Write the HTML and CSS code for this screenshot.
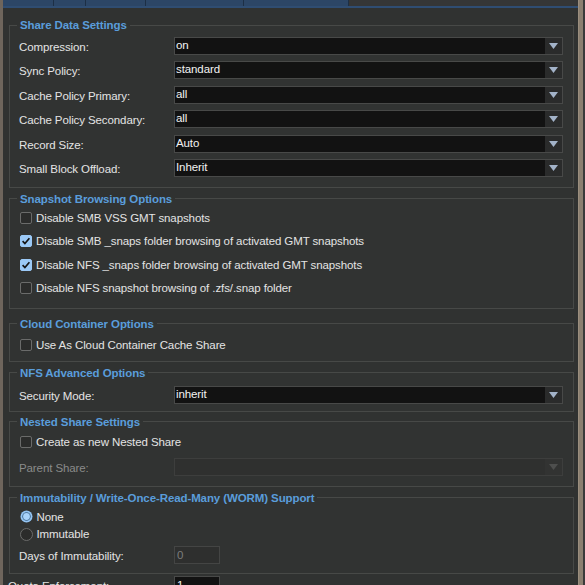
FILE: index.html
```html
<!DOCTYPE html>
<html>
<head>
<meta charset="utf-8">
<link rel="stylesheet" href="styles.css">
</head>
<body>
<div class="frame">
  <div class="strip-left"></div>
  <div class="main">
    <div class="tabs">
      <div class="tab w1"></div>
      <div class="tab w2"></div>
      <div class="tab w3"></div>
      <div class="tab w4"></div>
      <div class="tab w5"></div>
      <div class="tab-rest"></div>
    </div>

    <fieldset class="fs fs1">
      <legend>Share Data Settings</legend>
      <div class="grid">
        <label class="lbl">Compression:</label>
        <div class="select"><span class="val">on</span><span class="arrow"><svg width="9" height="6" viewBox="0 0 9 6"><path d="M0 0H9L4.5 6Z"/></svg></span></div>
        <label class="lbl">Sync Policy:</label>
        <div class="select"><span class="val">standard</span><span class="arrow"><svg width="9" height="6" viewBox="0 0 9 6"><path d="M0 0H9L4.5 6Z"/></svg></span></div>
        <label class="lbl">Cache Policy Primary:</label>
        <div class="select"><span class="val">all</span><span class="arrow"><svg width="9" height="6" viewBox="0 0 9 6"><path d="M0 0H9L4.5 6Z"/></svg></span></div>
        <label class="lbl">Cache Policy Secondary:</label>
        <div class="select"><span class="val">all</span><span class="arrow"><svg width="9" height="6" viewBox="0 0 9 6"><path d="M0 0H9L4.5 6Z"/></svg></span></div>
        <label class="lbl">Record Size:</label>
        <div class="select"><span class="val">Auto</span><span class="arrow"><svg width="9" height="6" viewBox="0 0 9 6"><path d="M0 0H9L4.5 6Z"/></svg></span></div>
        <label class="lbl">Small Block Offload:</label>
        <div class="select"><span class="val">Inherit</span><span class="arrow"><svg width="9" height="6" viewBox="0 0 9 6"><path d="M0 0H9L4.5 6Z"/></svg></span></div>
      </div>
    </fieldset>

    <fieldset class="fs fs2">
      <legend>Snapshot Browsing Options</legend>
      <div class="checks">
        <label class="check"><span class="box"></span>Disable SMB VSS GMT snapshots</label>
        <label class="check"><span class="box on"><svg width="12" height="12" viewBox="0 0 12 12"><path d="M2.6 6.2L4.9 8.6L9.4 3.2"/></svg></span>Disable SMB _snaps folder browsing of activated GMT snapshots</label>
        <label class="check"><span class="box on"><svg width="12" height="12" viewBox="0 0 12 12"><path d="M2.6 6.2L4.9 8.6L9.4 3.2"/></svg></span>Disable NFS _snaps folder browsing of activated GMT snapshots</label>
        <label class="check"><span class="box"></span>Disable NFS snapshot browsing of .zfs/.snap folder</label>
      </div>
    </fieldset>

    <fieldset class="fs fs3">
      <legend>Cloud Container Options</legend>
      <label class="check"><span class="box"></span>Use As Cloud Container Cache Share</label>
    </fieldset>

    <fieldset class="fs fs4">
      <legend>NFS Advanced Options</legend>
      <div class="grid">
        <label class="lbl">Security Mode:</label>
        <div class="select"><span class="val">inherit</span><span class="arrow"><svg width="9" height="6" viewBox="0 0 9 6"><path d="M0 0H9L4.5 6Z"/></svg></span></div>
      </div>
    </fieldset>

    <fieldset class="fs fs5">
      <legend>Nested Share Settings</legend>
      <label class="check"><span class="box"></span>Create as new Nested Share</label>
      <div class="grid grid-parent">
        <label class="lbl dim">Parent Share:</label>
        <div class="select disabled"><span class="val"></span><span class="arrow"><svg width="9" height="6" viewBox="0 0 9 6"><path d="M0 0H9L4.5 6Z"/></svg></span></div>
      </div>
    </fieldset>

    <fieldset class="fs fs6">
      <legend>Immutability / Write-Once-Read-Many (WORM) Support</legend>
      <div class="radios">
        <label class="radio"><span class="dot on"><svg width="13" height="13" viewBox="0 0 13 13"><circle cx="6.5" cy="6.5" r="6" class="r-out"/><circle cx="6.5" cy="6.5" r="4.2" class="r-ring"/><circle cx="6.5" cy="6.5" r="3.4" class="r-in"/></svg></span>None</label>
        <label class="radio"><span class="dot"></span>Immutable</label>
      </div>
      <div class="grid grid-days">
        <label class="lbl">Days of Immutability:</label>
        <div class="smallinput disabled">0</div>
      </div>
    </fieldset>

    <div class="grid grid-bottom">
      <label class="lbl">Quota Enforcement:</label>
      <div class="smallinput">1</div>
    </div>
  </div>
  <div class="strip-right"></div>
  <div class="strip-edge"></div>
</div>
</body>
</html>
```

FILE: styles.css
```css
* { box-sizing: border-box; }

html, body {
  margin: 0;
  padding: 0;
  height: 585px;
  overflow: hidden;
  background: #303231;
}

body {
  font-family: "Liberation Sans", Arial, sans-serif;
  font-size: 11.5px;
  letter-spacing: -0.1px;
  color: #e4e4e4;
}

.frame {
  display: flex;
  height: 585px;
}

.strip-left {
  width: 3px;
  flex: none;
  background: #6e655c;
}

.strip-right {
  width: 5px;
  flex: none;
  background: #8b7f70;
  border-left: 1px solid #9a8e7e;
}

.strip-edge {
  width: 2px;
  flex: none;
  background: #3a3a3a;
}

.main {
  flex: 1;
  min-width: 0;
  background: #303231;
}

.tabs {
  display: flex;
  height: 8px;
  border-bottom: 2px solid #2f4d72;
}

.tab {
  background: #2c4666;
  border-left: 1px solid #1d2f45;
  flex: none;
}
.w1 { width: 50px; border-left: none; }
.w2 { width: 32px; }
.w3 { width: 60px; }
.w4 { width: 98px; }
.w5 { width: 105px; }
.tab-rest {
  flex: 1;
  background: #353636;
  border-left: 1px solid #1d2f45;
}

.fs {
  margin: 0 4px 0 6px;
  border: 1px solid #474947;
  padding: 0 10px 0 9px;
  min-width: 0;
  background: #313332;
}

.fs legend {
  font-weight: bold;
  font-size: 11.5px;
  line-height: 14px;
  color: #5a9ddb;
  padding: 0 3px;
  margin-left: -2px;
}

.fs1 { margin-top: 10px; padding-top: 5px; padding-bottom: 10px; }
.fs2 { margin-top: 4px; padding-top: 4px; padding-bottom: 11.5px; }
.fs3 { margin-top: 8px; padding-top: 6px; padding-bottom: 8px; }
.fs4 { margin-top: 4px; padding-top: 6px; padding-bottom: 7px; }
.fs5 { margin-top: 3px; padding-top: 5px; padding-bottom: 10px; }
.fs6 { margin-top: 4px; padding-top: 4px; padding-bottom: 9px; }

.grid {
  display: grid;
  grid-template-columns: 155px 1fr;
  row-gap: 6.4px;
  align-items: start;
}

.lbl {
  padding-top: 3px;
  line-height: 15px;
  white-space: nowrap;
}
.lbl.dim { color: #8a8b8a; }

.select {
  height: 18px;
  display: flex;
  background: #121212;
  border: 1px solid #484948;
}
.select .val {
  flex: 1;
  padding-left: 1px;
  line-height: 15px;
  color: #f2f2f2;
}
.select .arrow {
  width: 17px;
  flex: none;
  background: #2a2b2b;
  display: flex;
  align-items: center;
  justify-content: center;
}
.select .arrow svg { fill: #a3b3c9; }

.select.disabled {
  background: #2f302f;
  border-color: #3d3e3d;
}
.select.disabled .arrow { background: #323332; }
.select.disabled .arrow svg { fill: #4e4f4e; }

.checks {
  display: flex;
  flex-direction: column;
  gap: 7.4px;
}

.check, .radio {
  display: flex;
  align-items: center;
  height: 16px;
  gap: 4px;
  padding-left: 1px;
  white-space: nowrap;
}

.box {
  width: 12px;
  height: 12px;
  flex: none;
  border: 1px solid #6a6b6a;
  border-radius: 2px;
  background: #2b2c2b;
  display: flex;
}
.box.on {
  background: #9bc9f6;
  border-color: #9bc9f6;
}
.box svg {
  margin: -1px;
  fill: none;
  stroke: #151515;
  stroke-width: 1.7;
}

.grid-parent { margin-top: 8px; }

.radios {
  display: flex;
  flex-direction: column;
  gap: 1.6px;
}

.dot {
  width: 13px;
  height: 13px;
  flex: none;
  border: 1px solid #6a6b6a;
  border-radius: 50%;
  background: #2b2c2b;
  margin-left: -0.5px;
}
.dot.on {
  border: none;
  background: none;
}
.r-out { fill: #94c4f2; }
.r-ring { fill: #3d6488; }
.r-in { fill: #a9d3fa; }

.grid-days { margin-top: 3.7px; }

.smallinput {
  width: 46px;
  height: 18px;
  background: #121212;
  border: 1px solid #484948;
  padding-left: 2px;
  line-height: 16px;
  color: #f0f0f0;
}
.smallinput.disabled {
  background: #2e2f2e;
  border-color: #444544;
  color: #7c7d7c;
}

.grid-bottom {
  margin: 2.5px 0 0 5px;
  grid-template-columns: 166px 46px;
}
```
